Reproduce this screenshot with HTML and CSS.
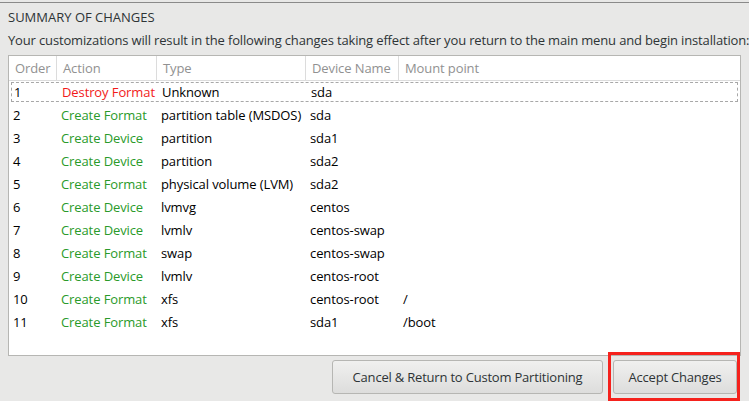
FILE: index.html
```html
<!DOCTYPE html>
<html>
<head>
<meta charset="utf-8">
<link rel="stylesheet" href="styles.css">
</head>
<body>
<div class="topline"></div>
<div class="dialog">
  <h1 class="title">SUMMARY OF CHANGES</h1>
  <p class="desc">Your customizations will result in the following changes taking effect after you return to the main menu and begin installation:</p>
  <div class="table">
    <div class="row head">
      <div class="c c1">Order</div>
      <div class="c c2">Action</div>
      <div class="c c3">Type</div>
      <div class="c c4">Device Name</div>
      <div class="c c5">Mount point</div>
    </div>
    <div class="row focus">
      <div class="c c1">1</div><div class="c c2 red">Destroy Format</div><div class="c c3">Unknown</div><div class="c c4">sda</div><div class="c c5"></div>
    </div>
    <div class="row">
      <div class="c c1">2</div><div class="c c2 green">Create Format</div><div class="c c3">partition table (MSDOS)</div><div class="c c4">sda</div><div class="c c5"></div>
    </div>
    <div class="row">
      <div class="c c1">3</div><div class="c c2 green">Create Device</div><div class="c c3">partition</div><div class="c c4">sda1</div><div class="c c5"></div>
    </div>
    <div class="row">
      <div class="c c1">4</div><div class="c c2 green">Create Device</div><div class="c c3">partition</div><div class="c c4">sda2</div><div class="c c5"></div>
    </div>
    <div class="row">
      <div class="c c1">5</div><div class="c c2 green">Create Format</div><div class="c c3">physical volume (LVM)</div><div class="c c4">sda2</div><div class="c c5"></div>
    </div>
    <div class="row">
      <div class="c c1">6</div><div class="c c2 green">Create Device</div><div class="c c3">lvmvg</div><div class="c c4">centos</div><div class="c c5"></div>
    </div>
    <div class="row">
      <div class="c c1">7</div><div class="c c2 green">Create Device</div><div class="c c3">lvmlv</div><div class="c c4">centos-swap</div><div class="c c5"></div>
    </div>
    <div class="row">
      <div class="c c1">8</div><div class="c c2 green">Create Format</div><div class="c c3">swap</div><div class="c c4">centos-swap</div><div class="c c5"></div>
    </div>
    <div class="row">
      <div class="c c1">9</div><div class="c c2 green">Create Device</div><div class="c c3">lvmlv</div><div class="c c4">centos-root</div><div class="c c5"></div>
    </div>
    <div class="row">
      <div class="c c1">10</div><div class="c c2 green">Create Format</div><div class="c c3">xfs</div><div class="c c4">centos-root</div><div class="c c5">/</div>
    </div>
    <div class="row">
      <div class="c c1">11</div><div class="c c2 green">Create Format</div><div class="c c3">xfs</div><div class="c c4">sda1</div><div class="c c5">/boot</div>
    </div>
  </div>
  <div class="buttons">
    <button class="btn cancel">Cancel &amp; Return to Custom Partitioning</button>
    <div class="highlight"><button class="btn accept">Accept Changes</button></div>
  </div>
</div>
</body>
</html>
```
FILE: styles.css
```css
html, body {
  margin: 0;
  padding: 0;
  background: #e8e8e7;
  width: 749px;
  height: 401px;
  overflow: hidden;
  font-family: "Open Sans", "DejaVu Sans", sans-serif;
  color: #2e3436;
}
.topline {
  height: 2px;
  border-bottom: 1px solid #8a8a8a;
  background: #e8e8e7;
}
.dialog {
  padding: 0 8px;
}
.title {
  margin: 5px 0 0;
  font-size: 13px;
  font-weight: normal;
  line-height: 18px;
  color: #2e3436;
}
.desc {
  margin: 5px 0 0;
  font-size: 13px;
  line-height: 18px;
  letter-spacing: -0.15px;
  white-space: nowrap;
}
.table {
  margin-top: 6px;
  width: 733px;
  height: 301px;
  background: #fff;
  border: 1px solid #b6b6b3;
  box-sizing: border-box;
}
.row {
  display: flex;
  height: 23px;
  align-items: center;
  font-size: 13px;
  letter-spacing: -0.1px;
  color: #000;
  box-sizing: border-box;
}
.row.head {
  height: 25px;
  color: #919191;
  border-bottom: 1px solid #dcdcdc;
  align-items: stretch;
}
.row.head .c {
  display: flex;
  align-items: center;
  padding-left: 6px;
  border-right: 1px solid #dcdcdc;
}
.row.head .c5 { border-right: none; }
.row.focus {
  margin: 1px 2px 1px;
  height: 20px;
  border: 1px dashed #a8a8a8;
}
.c { box-sizing: border-box; padding-left: 4px; white-space: nowrap; }
.c1 { width: 48px; }
.c2 { width: 100px; }
.c3 { width: 149px; }
.c4 { width: 93px; }
.c5 { flex: 1; }
.row.focus .c1 { width: 46px; padding-left: 2px; }
.red { color: #f21a1a; }
.green { color: #2a9a2a; }
.buttons {
  display: flex;
  justify-content: flex-end;
  align-items: flex-start;
  margin-top: 4px;
  padding-right: 1px;
}
.btn {
  font-family: "Open Sans", "DejaVu Sans", sans-serif;
  font-size: 13px;
  color: #2e3436;
  height: 34px;
  border: 1px solid #b6b6b3;
  border-radius: 3px;
  background: linear-gradient(#f0f0ef, #dddddc);
  padding: 0;
  letter-spacing: -0.2px;
}
.cancel {
  width: 271px;
}
.highlight {
  margin-left: 5px;
  border: 3px solid #f5221d;
  padding: 5px 0 0 2px;
  width: 132px;
  height: 49px;
  box-sizing: border-box;
  margin-top: -8px;
  display: flex;
  align-items: flex-start;
}
.accept {
  width: 124px;
}
```
